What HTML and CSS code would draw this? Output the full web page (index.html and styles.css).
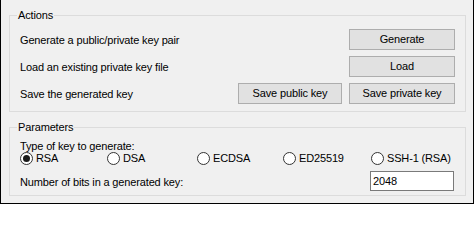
FILE: index.html
```html
<!DOCTYPE html>
<html>
<head>
<meta charset="utf-8">
<link rel="stylesheet" href="styles.css">
</head>
<body>
<div class="frame">
<div class="window">
  <fieldset class="group actions">
    <legend>Actions</legend>
    <div class="row">
      <span class="label">Generate a public/private key pair</span>
      <div class="btns"><button class="btn wide">Generate</button></div>
    </div>
    <div class="row">
      <span class="label">Load an existing private key file</span>
      <div class="btns"><button class="btn wide">Load</button></div>
    </div>
    <div class="row">
      <span class="label">Save the generated key</span>
      <div class="btns"><button class="btn pub">Save public key</button><button class="btn wide">Save private key</button></div>
    </div>
  </fieldset>
  <fieldset class="group params">
    <legend>Parameters</legend>
    <div class="type">Type of key to generate:</div>
    <div class="radios">
      <label class="radio"><span class="circle checked"></span>RSA</label>
      <label class="radio"><span class="circle"></span>DSA</label>
      <label class="radio"><span class="circle"></span>ECDSA</label>
      <label class="radio"><span class="circle"></span>ED25519</label>
      <label class="radio"><span class="circle"></span>SSH-1 (RSA)</label>
    </div>
    <div class="bits">
      <span class="label">Number of bits in a generated key:</span>
      <div class="input">2048</div>
    </div>
  </fieldset>
</div>
</div>
</body>
</html>
```
FILE: styles.css
```css
html, body {
  margin: 0;
  padding: 0;
  background: #ffffff;
}
body {
  font-family: "Liberation Sans", Arial, sans-serif;
  font-size: 11px;
  letter-spacing: -0.15px;
  color: #000;
}
.frame {
  box-sizing: border-box;
  width: 474px;
  height: 204px;
  background: #000;
  padding: 0 1px 1px 1px;
}
.window {
  box-sizing: border-box;
  width: 472px;
  height: 203px;
  background: #f0f0f0;
  padding: 9px 7px 0 8px;
  overflow: hidden;
}
.group {
  margin: 0;
  padding: 0 10px 0 9px;
  border: 1px solid #dcdcdc;
  width: 457px;
  box-sizing: border-box;
  min-width: 0;
}
.group legend {
  padding: 0 1px;
  margin-left: -2px;
  line-height: 13px;
  height: 13px;
}
.actions {
  height: 103px;
  padding-top: 7px;
  display: flex;
  flex-direction: column;
  gap: 6px;
}
.row {
  display: flex;
  align-items: center;
  justify-content: space-between;
  height: 21px;
}
.row .label {
  padding-left: 1px;
  padding-top: 1px;
}
.btns {
  display: flex;
  gap: 7px;
}
.btn {
  font-family: "Liberation Sans", Arial, sans-serif;
  font-size: 11px;
  letter-spacing: -0.15px;
  color: #000;
  background: #e1e1e1;
  border: 1px solid #adadad;
  height: 21px;
  padding: 0;
  margin: 0;
  border-radius: 0;
  line-height: 19px;
}
.btn.wide { width: 106px; }
.btn.pub { width: 104px; }
.params {
  margin-top: 9px;
  height: 75px;
  padding-top: 6px;
}
.type {
  line-height: 12px;
  height: 12px;
  padding-left: 1px;
}
.radios {
  display: grid;
  grid-template-columns: 87px 90px 86px 88px auto;
  height: 13px;
  padding-left: 1px;
}
.radio {
  display: flex;
  align-items: center;
  gap: 3px;
  line-height: 13px;
}
.circle {
  width: 13px;
  height: 13px;
  box-sizing: border-box;
  border: 1px solid #333;
  border-radius: 50%;
  background: #fff;
  display: flex;
  align-items: center;
  justify-content: center;
}
.circle.checked::after {
  content: "";
  width: 7px;
  height: 7px;
  border-radius: 50%;
  background: #1a1a1a;
}
.bits {
  display: flex;
  align-items: center;
  justify-content: space-between;
  margin-top: 6px;
  height: 20px;
}
.bits .label {
  padding-left: 1px;
  padding-top: 2px;
}
.input {
  width: 84px;
  height: 20px;
  box-sizing: border-box;
  border: 1px solid #7a7a7a;
  background: #fff;
  line-height: 18px;
  padding-left: 2px;
  margin-right: 1px;
}
```
